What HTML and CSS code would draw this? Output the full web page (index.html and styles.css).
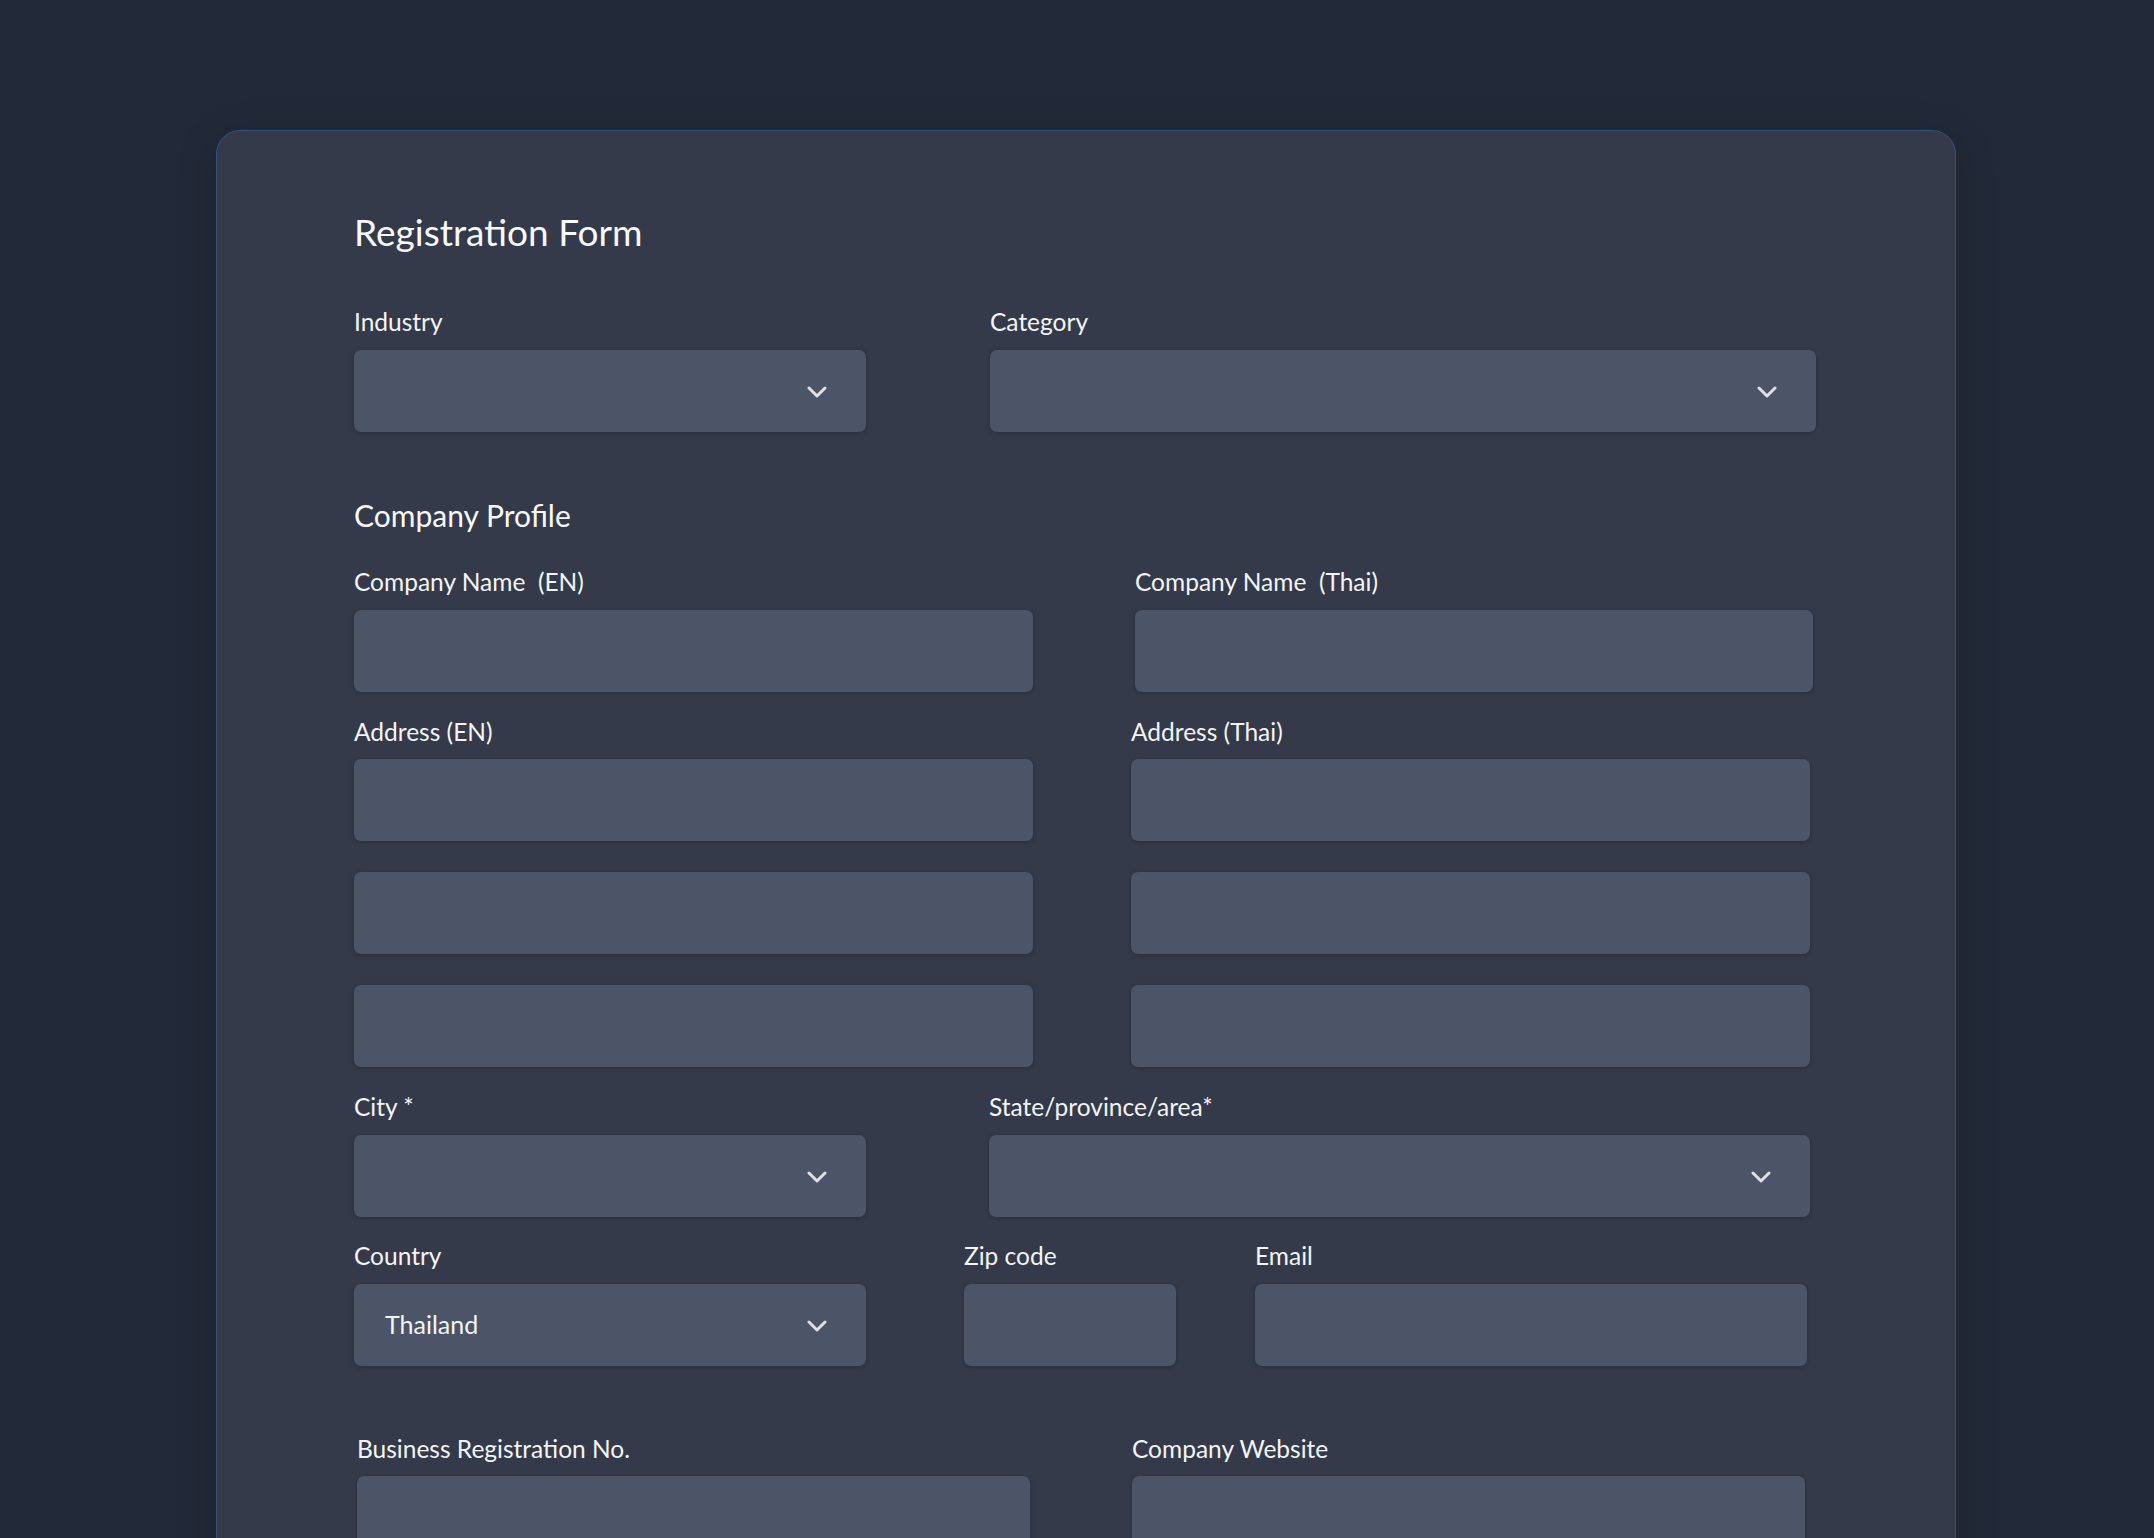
FILE: index.html
```html
<!DOCTYPE html>
<html lang="en">
<head>
<meta charset="utf-8">
<title>Registration Form</title>
<link rel="stylesheet" href="styles.css">
</head>
<body>
<div class="page">
  <form class="card">
    <h1 class="title">Registration Form</h1>

    <div class="row row-industry">
      <div class="group">
        <label class="label">Industry</label>
        <div class="field select"><span class="value"></span>
          <svg class="chev" width="20" height="12" viewBox="0 0 20 12"><polyline points="2,2 10,10 18,2" fill="none" stroke="currentColor" stroke-width="3" stroke-linecap="round" stroke-linejoin="round"/></svg>
        </div>
      </div>
      <div class="group">
        <label class="label">Category</label>
        <div class="field select"><span class="value"></span>
          <svg class="chev" width="20" height="12" viewBox="0 0 20 12"><polyline points="2,2 10,10 18,2" fill="none" stroke="currentColor" stroke-width="3" stroke-linecap="round" stroke-linejoin="round"/></svg>
        </div>
      </div>
    </div>

    <h2 class="section">Company Profile</h2>

    <div class="row row-name">
      <div class="group">
        <label class="label">Company Name&nbsp; (EN)</label>
        <input class="field" type="text">
      </div>
      <div class="group">
        <label class="label">Company Name&nbsp; (Thai)</label>
        <input class="field" type="text">
      </div>
    </div>

    <div class="row row-address">
      <div class="group">
        <label class="label">Address (EN)</label>
        <div class="stack">
          <input class="field" type="text">
          <input class="field" type="text">
          <input class="field" type="text">
        </div>
      </div>
      <div class="group">
        <label class="label">Address (Thai)</label>
        <div class="stack">
          <input class="field" type="text">
          <input class="field" type="text">
          <input class="field" type="text">
        </div>
      </div>
    </div>

    <div class="row row-city">
      <div class="group">
        <label class="label">City *</label>
        <div class="field select"><span class="value"></span>
          <svg class="chev" width="20" height="12" viewBox="0 0 20 12"><polyline points="2,2 10,10 18,2" fill="none" stroke="currentColor" stroke-width="3" stroke-linecap="round" stroke-linejoin="round"/></svg>
        </div>
      </div>
      <div class="group">
        <label class="label">State/province/area*</label>
        <div class="field select"><span class="value"></span>
          <svg class="chev" width="20" height="12" viewBox="0 0 20 12"><polyline points="2,2 10,10 18,2" fill="none" stroke="currentColor" stroke-width="3" stroke-linecap="round" stroke-linejoin="round"/></svg>
        </div>
      </div>
    </div>

    <div class="row row-country">
      <div class="group">
        <label class="label">Country</label>
        <div class="field select"><span class="value">Thailand</span>
          <svg class="chev" width="20" height="12" viewBox="0 0 20 12"><polyline points="2,2 10,10 18,2" fill="none" stroke="currentColor" stroke-width="3" stroke-linecap="round" stroke-linejoin="round"/></svg>
        </div>
      </div>
      <div class="group">
        <label class="label">Zip code</label>
        <input class="field" type="text">
      </div>
      <div class="group">
        <label class="label">Email</label>
        <input class="field" type="text">
      </div>
    </div>

    <div class="row row-business">
      <div class="group">
        <label class="label">Business Registration No.</label>
        <input class="field" type="text">
      </div>
      <div class="group">
        <label class="label">Company Website</label>
        <input class="field" type="text">
      </div>
    </div>
  </form>
</div>
</body>
</html>
```

FILE: styles.css
```css
html, body {
  margin: 0;
  padding: 0;
  height: 100%;
  overflow: hidden;
  background: #222938;
}

body {
  font-family: Lato, "Open Sans", "Liberation Sans", sans-serif;
  color: #f3f4f6;
}

.page {
  padding: 130px 0 0 216px;
}

.card {
  width: 1740px;
  min-height: 1600px;
  background: #343a4a;
  border: 1px solid #35507a;
  border-radius: 24px;
  box-shadow: 0 10px 40px rgba(0, 0, 0, 0.18);
  padding: 78px 0 0 137px;
  box-sizing: border-box;
  display: flex;
  flex-direction: column;
  align-items: flex-start;
}

.title {
  margin: 0;
  font-size: 37px;
  line-height: 45px;
  font-weight: 400;
  color: #f8f9fa;
}

.section {
  margin: 66px 0 0;
  font-size: 30px;
  line-height: 35px;
  font-weight: 400;
  color: #f8f9fa;
}

.row {
  display: grid;
  align-items: start;
}

.group {
  display: flex;
  flex-direction: column;
}

.label {
  font-size: 24.5px;
  line-height: 30px;
  padding-top: 1px;
  margin-bottom: 13px;
  color: #f3f4f6;
  white-space: nowrap;
}

.field {
  display: block;
  box-sizing: border-box;
  width: 100%;
  height: 82px;
  margin: 0;
  padding: 0 30px;
  border: none;
  outline: none;
  border-radius: 7px;
  background: #4c5467;
  box-shadow: 0 1px 4px rgba(0, 0, 0, 0.22);
  font-family: inherit;
  font-size: 25px;
  color: #f3f4f6;
}

.select {
  display: flex;
  align-items: center;
  justify-content: space-between;
  padding: 0 39px 0 31px;
}

.select .chev {
  color: #dfe1e5;
  flex: none;
  margin-top: 2px;
}

.value {
  font-size: 25px;
  margin-top: -2px;
}

.stack {
  display: flex;
  flex-direction: column;
  gap: 31px;
}

.row-industry {
  margin-top: 52px;
  grid-template-columns: 512px 826px;
  column-gap: 124px;
}

.row-name {
  margin-top: 33px;
  grid-template-columns: 679px 678px;
  column-gap: 102px;
}

.row-address {
  margin-top: 23px;
  grid-template-columns: 679px 679px;
  column-gap: 98px;
}

.row-address .label {
  padding-top: 2px;
  margin-bottom: 12px;
}

.row-city {
  margin-top: 24px;
  grid-template-columns: 512px 821px;
  column-gap: 123px;
}

.row-country {
  margin-top: 23px;
  grid-template-columns: 512px 98px 212px 79px 552px;
  column-gap: 0;
}

.row-country .group:nth-child(1) { grid-column: 1; }
.row-country .group:nth-child(2) { grid-column: 3; }
.row-country .group:nth-child(3) { grid-column: 5; }

.row-business {
  margin-top: 66px;
  margin-left: 3px;
  grid-template-columns: 673px 673px;
  column-gap: 102px;
}

.row-business .label {
  padding-top: 2px;
  margin-bottom: 12px;
}
```
